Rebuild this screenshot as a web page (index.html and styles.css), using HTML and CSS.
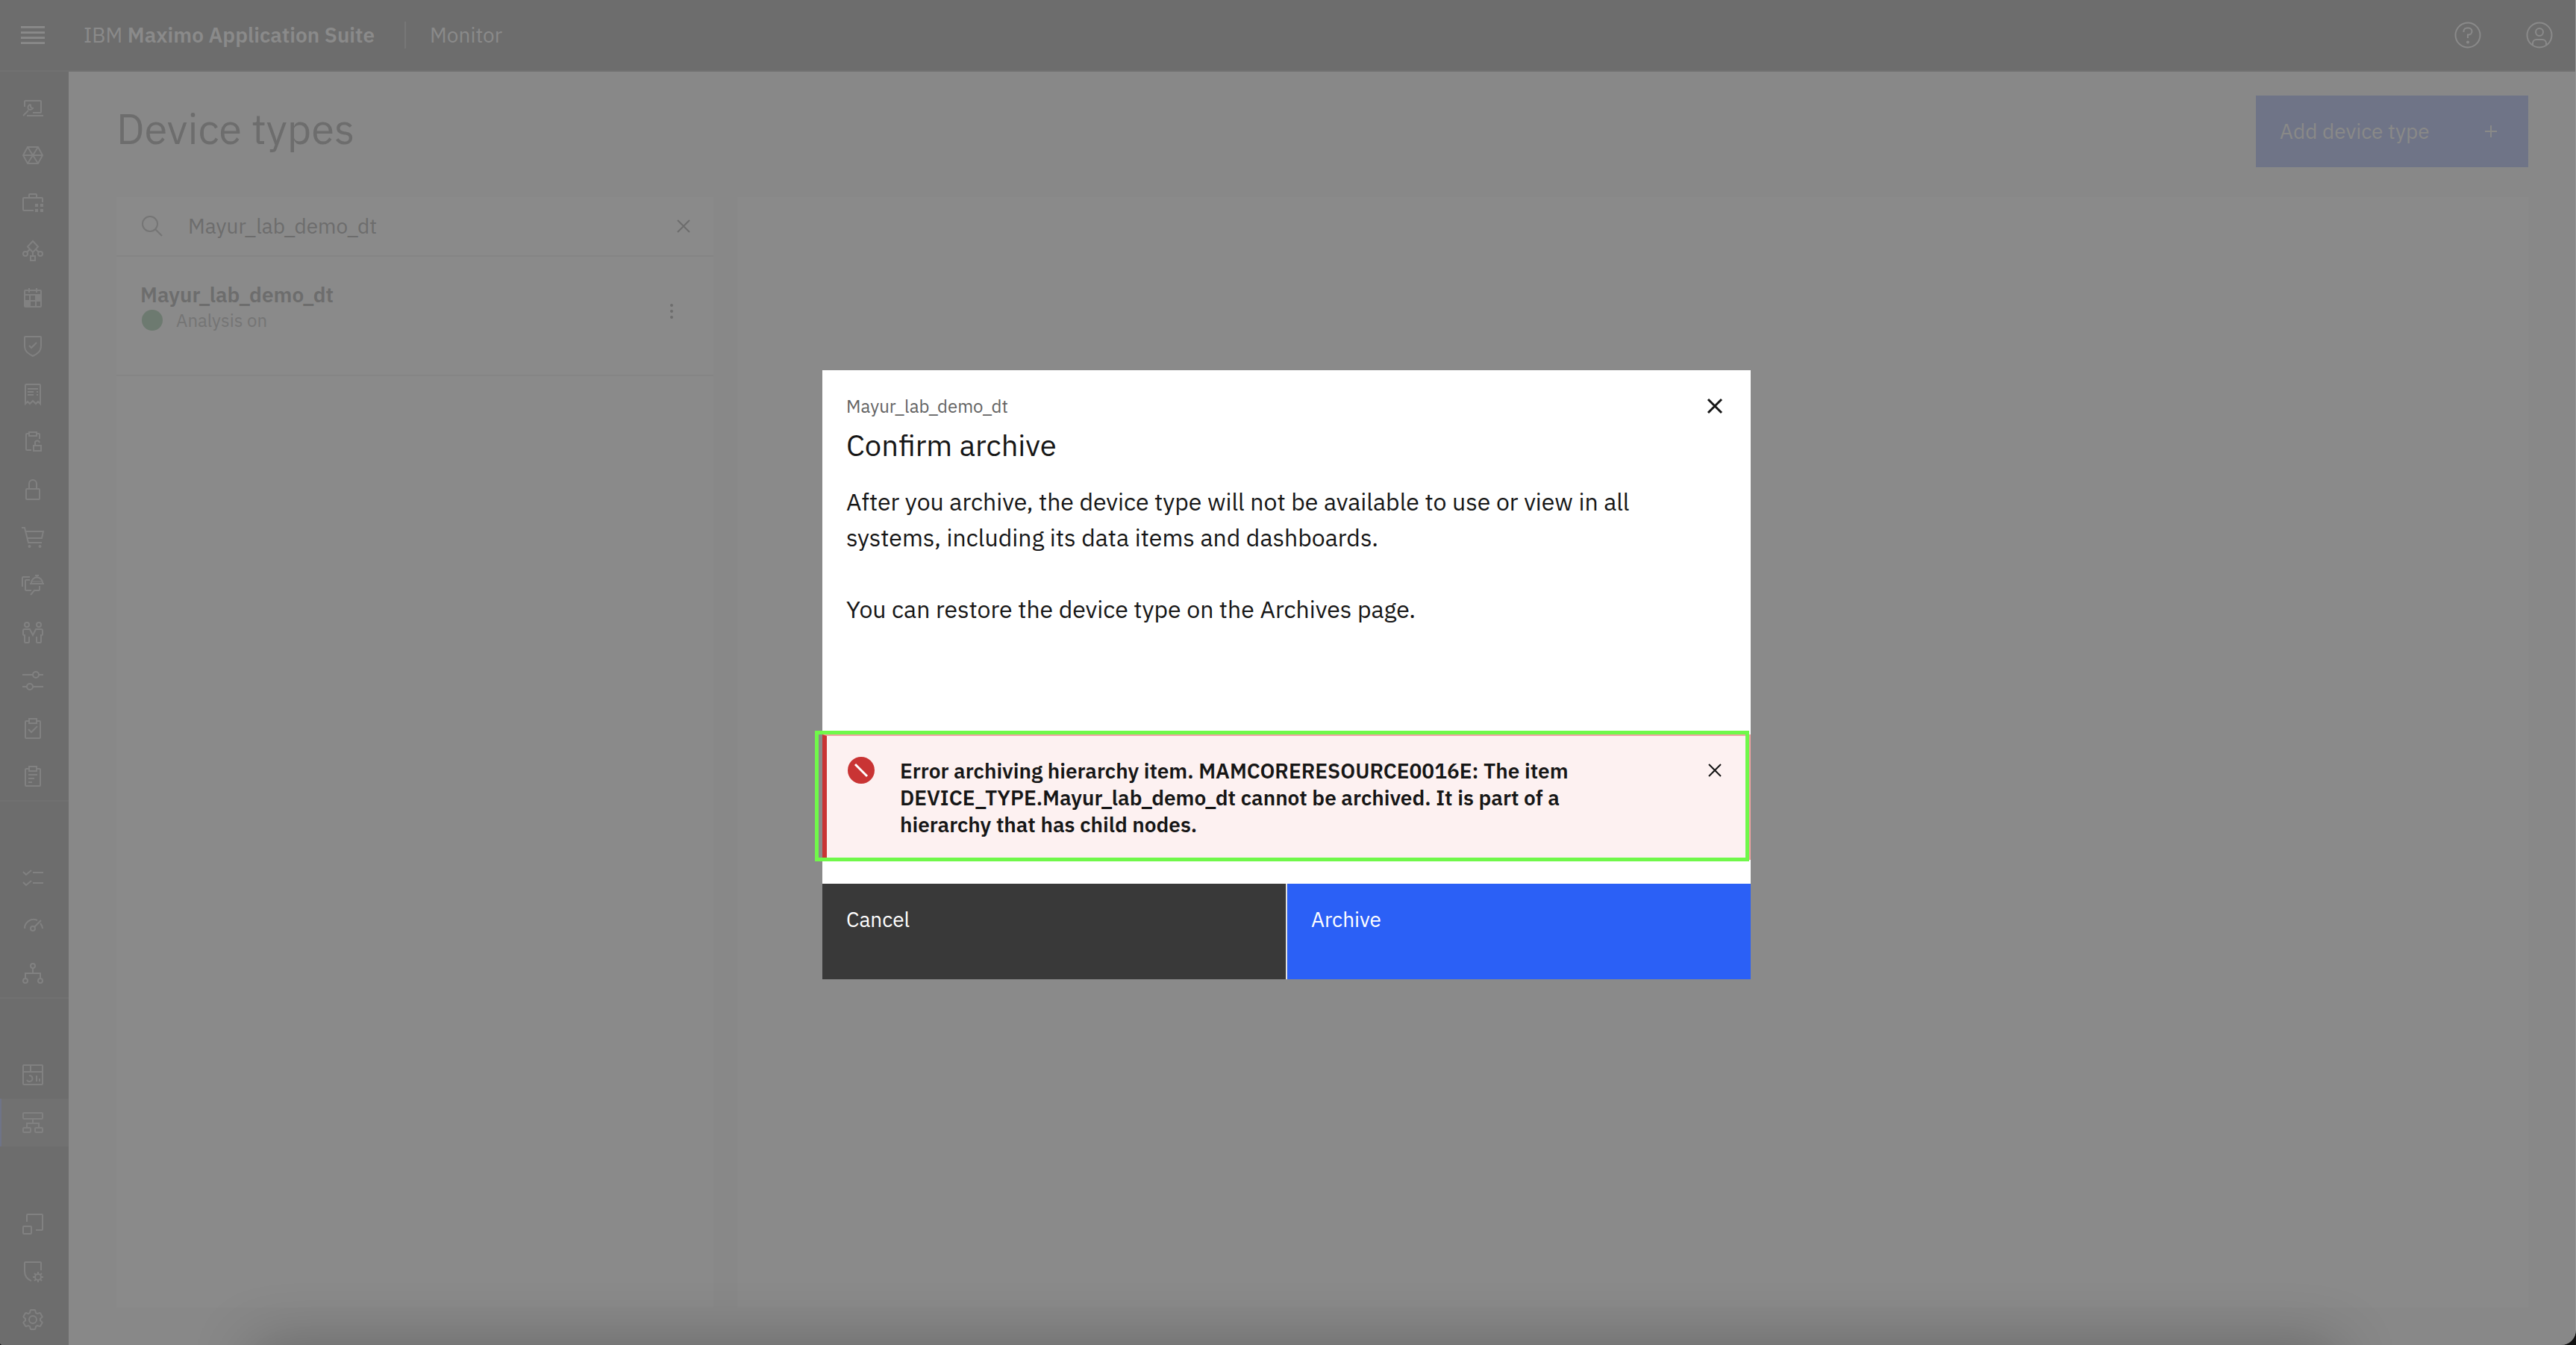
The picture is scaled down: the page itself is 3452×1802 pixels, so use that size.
FILE: index.html
```html
<!DOCTYPE html>
<html lang="en">
<head>
<meta charset="utf-8">
<meta name="viewport" content="width=device-width, initial-scale=1">
<title>Device types - IBM Maximo Application Suite</title>
<link rel="stylesheet" href="styles.css">
</head>
<body>
<div class="app">
  <header class="header">
    <button class="header-btn menu-btn" type="button" aria-label="Open menu">
      <svg class="icon-lg" viewBox="0 0 20 20"><path fill="currentColor" d="M2 4h16v1.4H2zM2 7.6h16V9H2zM2 11.1h16v1.4H2zM2 14.6h16V16H2z"/></svg>
    </button>
    <a class="brand" href="#">IBM <strong>Maximo Application Suite</strong></a>
    <span class="brand-divider"></span>
    <a class="product" href="#">Monitor</a>
    <div class="header-actions">
      <button class="header-btn" type="button" aria-label="Help">
        <svg class="icon-lg" viewBox="0 0 40 40" fill="none" stroke="currentColor" stroke-width="2"><circle cx="20" cy="20" r="16.5"/><path d="M14.5 16v-1a4.500 4.500 0 0 1 4.500-4.500h2a4.500 4.500 0 0 1 0 9h-1V24"/><circle cx="20" cy="29.500" r="2" fill="currentColor" stroke="none"/></svg>
      </button>
      <button class="header-btn" type="button" aria-label="Account">
        <svg class="icon-lg" viewBox="0 0 40 40" fill="none" stroke="currentColor" stroke-width="2"><circle cx="20" cy="20" r="16.5"/><circle cx="20" cy="16" r="5"/><path d="M11 33v-2a5 5 0 0 1 5-5h8a5 5 0 0 1 5 5v2"/></svg>
      </button>
    </div>
  </header>

  <nav class="sidenav" aria-label="Main">
    <div class="nav-group">
      <a class="nav-item" href="#" aria-label="Technician"><svg class="icon" viewBox="0 0 32 32"><path d="M5 15V8a1 1 0 0 1 1-1h20a1 1 0 0 1 1 1v14a1 1 0 0 1-1 1H16M8 27h22M3 27l7-7M13 12a4 4 0 0 0-3 6 4 4 0 0 0 6-1M13 12v3l2 2h2"/></svg></a>
      <a class="nav-item" href="#" aria-label="Assets"><svg class="icon" viewBox="0 0 32 32"><path d="M9 5h14l6 11-6 11H9L3 16zM9 5l14 22M23 5L9 27M3 16h26"/></svg></a>
      <a class="nav-item" href="#" aria-label="Portfolio"><svg class="icon" viewBox="0 0 32 32"><path d="M29 15v-5a1 1 0 0 0-1-1H4a1 1 0 0 0-1 1v15a1 1 0 0 0 1 1h13M11 9V5a1 1 0 0 1 1-1h8a1 1 0 0 1 1 1v4"/><path class="solid" d="M19 17h4v4h-4zM26 17h4v4h-4zM19 24h4v4h-4zM26 24h4v4h-4z"/></svg></a>
      <a class="nav-item" href="#" aria-label="Models"><svg class="icon" viewBox="0 0 32 32"><path d="M16 3l7 7.500-7 7.500-7-7.500zM16 18v4M12 14l-4 4M20 14l4 4M13 23h6v6h-6z"/><circle cx="6" cy="20" r="3"/><circle cx="26" cy="20" r="3"/></svg></a>
      <a class="nav-item" href="#" aria-label="Planning"><svg class="icon" viewBox="0 0 32 32"><path class="solid" fill-rule="evenodd" d="M6 4h4V2h2v2h8V2h2v2h4a2 2 0 0 1 2 2v20a2 2 0 0 1-2 2H6a2 2 0 0 1-2-2V6a2 2 0 0 1 2-2zM6 6v4h20V6h-4v2h-2V6h-8v2h-2V6zM6 12v6h5v-6zM13 12v6h6v-6zM13 20v6h6v-6zM21 20v6h5v-6z"/></svg></a>
      <a class="nav-item" href="#" aria-label="Safety"><svg class="icon" viewBox="0 0 32 32"><path d="M6 3h20a1 1 0 0 1 1 1v11c0 8-5 11-11 14C10 26 5 23 5 15V4a1 1 0 0 1 1-1zM11 15l3 3 7-7"/></svg></a>
      <a class="nav-item" href="#" aria-label="Purchasing"><svg class="icon" viewBox="0 0 32 32"><path d="M6 29V4a1 1 0 0 1 1-1h18a1 1 0 0 1 1 1v25l-3-3-3 3-4-4-4 4-3-3zM9 9h14M9 13h8M9 17h8M21 13h2M21 17h2"/></svg></a>
      <a class="nav-item" href="#" aria-label="Contracts"><svg class="icon" viewBox="0 0 32 32"><path d="M11 5H8a1 1 0 0 0-1 1v20a1 1 0 0 0 1 1h6M21 5h3a1 1 0 0 1 1 1v6M11 3h10v5H11zM17 21h10v7H17zM19 21v-3a3 3 0 0 1 6-1"/></svg></a>
      <a class="nav-item" href="#" aria-label="Security"><svg class="icon" viewBox="0 0 32 32"><rect x="7" y="15" width="18" height="14" rx="1"/><path d="M11 15V8a5 5 0 0 1 10 0v7"/></svg></a>
      <a class="nav-item" href="#" aria-label="Inventory"><svg class="icon" viewBox="0 0 32 32"><path d="M1 3h4l5 20h18M7 8h23l-2 9H8"/><circle class="solid" cx="11.500" cy="28" r="2"/><circle class="solid" cx="25.500" cy="28" r="2"/></svg></a>
      <a class="nav-item" href="#" aria-label="Service desk"><svg class="icon" viewBox="0 0 32 32"><path d="M12 14h19M14 13a7.500 7.500 0 0 1 15 0M21.500 3v3M19 3h5M2 18V6a1 1 0 0 1 1-1h9M14 23H7a1 1 0 0 1-1-1V10a1 1 0 0 1 1-1h5M13 29l5-6h6a1 1 0 0 0 1-1v-5"/><path d="M15 11h13" stroke-width="1"/></svg></a>
      <a class="nav-item" href="#" aria-label="Resources"><svg class="icon" viewBox="0 0 32 32"><circle cx="8" cy="5" r="3"/><circle cx="24" cy="5" r="3"/><path d="M11 21v7a1 1 0 0 1-1 1H6a1 1 0 0 1-1-1v-9H4a1 1 0 0 1-1-1v-5a2 2 0 0 1 2-2h7l4 8 4-8h7a2 2 0 0 1 2 2v5a1 1 0 0 1-1 1h-1v9a1 1 0 0 1-1 1h-4a1 1 0 0 1-1-1v-7"/></svg></a>
      <a class="nav-item" href="#" aria-label="Adjustments"><svg class="icon" viewBox="0 0 32 32"><path d="M2 8h14M24 8h6M2 24h6M16 24h14"/><circle cx="20" cy="8" r="4"/><circle cx="12" cy="24" r="4"/></svg></a>
      <a class="nav-item" href="#" aria-label="Tasks"><svg class="icon" viewBox="0 0 32 32"><path d="M11 6H7a1 1 0 0 0-1 1v21a1 1 0 0 0 1 1h18a1 1 0 0 0 1-1V7a1 1 0 0 0-1-1h-4M11 3h10v6H11zM10 17l4 4 8-8"/></svg></a>
      <a class="nav-item" href="#" aria-label="Work orders"><svg class="icon" viewBox="0 0 32 32"><path d="M11 6H7a1 1 0 0 0-1 1v21a1 1 0 0 0 1 1h18a1 1 0 0 0 1-1V7a1 1 0 0 0-1-1h-4M11 3h10v6H11zM10 14h12M10 19h8M10 24h5"/></svg></a>
    </div>
    <div class="nav-group">
      <a class="nav-item" href="#" aria-label="Checklists"><svg class="icon" viewBox="0 0 32 32"><path d="M16 9h14M16 23h14M3 8l4 4 7-6M3 22l4 4 7-6"/></svg></a>
      <a class="nav-item" href="#" aria-label="Meters"><svg class="icon" viewBox="0 0 32 32"><path d="M5 20A12 12 0 0 1 22 9M29 20a12 12 0 0 0-3-7M18 18l9-9"/><circle cx="16" cy="20" r="3"/></svg></a>
      <a class="nav-item" href="#" aria-label="Hierarchies"><svg class="icon" viewBox="0 0 32 32"><circle cx="16" cy="6" r="3"/><circle cx="6" cy="26" r="3"/><circle cx="26" cy="26" r="3"/><path d="M16 9v7M6 23v-7h20v7"/></svg></a>
    </div>
    <div class="nav-group">
      <a class="nav-item" href="#" aria-label="Dashboards"><svg class="icon" viewBox="0 0 32 32"><rect x="3" y="3" width="26" height="26" rx="1"/><path d="M3 12h26M13 3v9M21 17v8M25 21v4M11 17a4 4 0 1 1-3 6"/></svg></a>
      <a class="nav-item active" href="#" aria-label="Device types" aria-current="page"><svg class="icon" viewBox="0 0 32 32"><rect x="3" y="3" width="26" height="8" rx="1"/><rect x="3" y="23" width="10" height="6" rx="1"/><rect x="19" y="23" width="10" height="6" rx="1"/><path d="M16 11v6M8 23v-6h16v6"/></svg></a>
    </div>
    <div class="nav-group">
      <a class="nav-item" href="#" aria-label="Setup"><svg class="icon" viewBox="0 0 32 32"><rect x="3" y="19" width="11" height="10" rx="1"/><path d="M8 13V4a1 1 0 0 1 1-1h19a1 1 0 0 1 1 1v19a1 1 0 0 1-1 1h-8"/></svg></a>
      <a class="nav-item" href="#" aria-label="Administration"><svg class="icon" viewBox="0 0 32 32"><path d="M27 14V4a1 1 0 0 0-1-1H6a1 1 0 0 0-1 1v11c0 7 4 11 9 13"/><circle cx="23" cy="23" r="4"/><path d="M23 16v3M23 27v3M16 23h3M27 23h3M18 18l2 2M26 26l2 2M18 28l2-2M26 20l2-2"/></svg></a>
      <a class="nav-item" href="#" aria-label="Settings"><svg class="icon" viewBox="0 0 32 32"><path class="solid" d="M27,16.760c0-.25,0-.5,0-.76s0-.51,0-.77l1.920-1.680A2,2,0,0,0,29.300,11L26.940,7a2,2,0,0,0-1.730-1,2,2,0,0,0-.64.1l-2.430.82a11.350,11.350,0,0,0-1.310-.75l-.51-2.520a2,2,0,0,0-2-1.610H13.640a2,2,0,0,0-2,1.610l-.51,2.520a11.480,11.480,0,0,0-1.320.75L7.430,6.060A2,2,0,0,0,6.790,6,2,2,0,0,0,5.060,7L2.700,11a2,2,0,0,0,.41,2.510L5,15.240c0,.25,0,.5,0,.76s0,.51,0,.77L3.110,18.450A2,2,0,0,0,2.700,21L5.060,25a2,2,0,0,0,1.730,1,2,2,0,0,0,.64-.1l2.430-.82a11.350,11.350,0,0,0,1.310.75l.51,2.520a2,2,0,0,0,2,1.610h4.720a2,2,0,0,0,2-1.610l.51-2.520a11.480,11.480,0,0,0,1.320-.75l2.420.82a2,2,0,0,0,.64.1,2,2,0,0,0,1.730-1L29.300,21a2,2,0,0,0-.41-2.510ZM25.210,24l-3.430-1.160a8.860,8.860,0,0,1-2.710,1.570L18.360,28H13.640l-.71-3.550a9.360,9.360,0,0,1-2.700-1.570L6.790,24,4.430,20l2.720-2.400a8.900,8.900,0,0,1,0-3.130L4.430,12,6.790,8l3.430,1.160a8.860,8.860,0,0,1,2.710-1.570L13.640,4h4.720l.71,3.550a9.360,9.360,0,0,1,2.700,1.570L25.210,8,27.570,12l-2.720,2.400a8.900,8.900,0,0,1,0,3.130L27.570,20Z"/><circle cx="16" cy="16" r="5"/></svg></a>
    </div>
  </nav>

  <main class="main">
    <div class="page-head">
      <h1 class="page-title">Device types</h1>
      <button class="add-btn" type="button"><span>Add device type</span>
        <svg class="icon" viewBox="0 0 32 32"><path d="M16 8v16M8 16h16"/></svg>
      </button>
    </div>
    <div class="panels">
      <section class="panel list-panel" aria-label="Device type list">
        <div class="search">
          <svg class="icon search-icon" viewBox="0 0 32 32"><circle cx="13" cy="13" r="10"/><path d="M20 20l9 9"/></svg>
          <input class="search-input" type="text" aria-label="Search device types" value="Mayur_lab_demo_dt">
          <button class="icon-btn" type="button" aria-label="Clear search"><svg class="icon" viewBox="0 0 32 32"><path d="M8 8l16 16M24 8L8 24"/></svg></button>
        </div>
        <div class="device">
          <div class="device-text">
            <h2 class="device-name">Mayur_lab_demo_dt</h2>
            <p class="device-status"><span class="status-dot"></span>Analysis on</p>
          </div>
          <button class="icon-btn" type="button" aria-label="More actions"><svg class="icon" viewBox="0 0 32 32"><circle class="solid" cx="16" cy="8" r="2"/><circle class="solid" cx="16" cy="16" r="2"/><circle class="solid" cx="16" cy="24" r="2"/></svg></button>
        </div>
      </section>
      <section class="panel" aria-label="Device type details"></section>
    </div>
  </main>
  <div class="dock-shadow"></div>
</div>

<div class="overlay">
  <div class="modal" role="dialog" aria-modal="true" aria-labelledby="modal-title">
    <div class="modal-head">
      <div>
        <p class="modal-label">Mayur_lab_demo_dt</p>
        <h2 class="modal-title" id="modal-title">Confirm archive</h2>
      </div>
      <button class="close-btn" type="button" aria-label="Close"><svg class="icon-lg" viewBox="0 0 40 40"><path d="M11 11l18 18M29 11L11 29" stroke-width="3"/></svg></button>
    </div>
    <div class="modal-body">
      <p>After you archive, the device type will not be available to use or view in all systems, including its data items and dashboards.</p>
      <p>You can restore the device type on the Archives page.</p>
    </div>
    <div class="notice" role="alert">
      <svg class="icon-lg notice-icon" viewBox="0 0 40 40"><circle cx="20" cy="20" r="18" fill="#c93434" stroke="none"/><path d="M12 12l16 16" stroke="#fff" stroke-width="3"/></svg>
      <p class="notice-text">Error archiving hierarchy item. MAMCORERESOURCE0016E: The item DEVICE_TYPE.Mayur_lab_demo_dt cannot be archived. It is part of a hierarchy that has child nodes.</p>
      <button class="close-btn" type="button" aria-label="Dismiss error"><svg class="icon-lg" viewBox="0 0 40 40"><path d="M12 12l16 16M28 12L12 28" stroke-width="2"/></svg></button>
      <div class="highlight"></div>
    </div>
    <div class="modal-foot">
      <button class="foot-btn cancel" type="button">Cancel</button>
      <button class="foot-btn primary" type="button">Archive</button>
    </div>
  </div>
</div>
</body>
</html>
```
FILE: styles.css
```css
* {
  box-sizing: border-box;
}

body {
  margin: 0;
  background: #101010;
  color: #6d6d6d;
  font-family: "IBM Plex Sans", "Liberation Sans", Arial, sans-serif;
  font-size: 28px;
  line-height: 36px;
}

h1, h2, p {
  margin: 0;
  font-weight: 400;
}

a {
  color: inherit;
  text-decoration: none;
}

button, input {
  border: 0;
  padding: 0;
  background: none;
  color: inherit;
  font: inherit;
}

svg {
  display: block;
  flex: none;
  fill: none;
  stroke: currentColor;
  stroke-width: 2;
}

.solid {
  fill: currentColor;
  stroke: none;
}

.menu-btn svg {
  stroke: none;
}

.icon {
  width: 32px;
  height: 32px;
}

.icon-lg {
  width: 40px;
  height: 40px;
}

/* Shell */
.app {
  position: relative;
  display: grid;
  grid-template: 96px 1fr / 92px 1fr;
  min-height: 100vh;
  overflow: hidden;
  background: #888;
  border-radius: 0 0 20px 4px;
  border-right: 1px solid #979797;
}

.header {
  grid-column: 1 / -1;
  display: flex;
  align-items: center;
  background: #6d6d6d;
  border-bottom: 2px solid #717171;
  color: #8a8a8a;
}

.header-btn {
  display: flex;
  align-items: center;
  justify-content: center;
  width: 96px;
  height: 94px;
}

.menu-btn {
  width: 88px;
}

.brand {
  margin-left: 24px;
}

.brand strong {
  font-weight: 600;
}

.brand-divider {
  width: 2px;
  height: 36px;
  margin: 0 32px 0 40px;
  background: #777;
}

.header-actions {
  display: flex;
  margin-left: auto;
}

.sidenav {
  display: flex;
  flex-direction: column;
  gap: 70px;
  padding-top: 16px;
  background: #6d6d6d;
  color: #818181;
}

.nav-group:not(:nth-last-child(-n+2)) {
  border-bottom: 2px solid #717171;
}

.nav-group:nth-last-child(2) {
  margin-bottom: 2px;
}

.nav-item {
  display: flex;
  align-items: center;
  height: 64px;
  padding-left: 28px;
}

.nav-item.active {
  padding-left: 26px;
  background: #717171;
  border-left: 2px solid #6f7487;
}

/* Page */
.main {
  display: flex;
  flex-direction: column;
  gap: 40px;
  padding: 32px 63px 50px 64px;
}

.page-head {
  display: flex;
  justify-content: space-between;
  height: 96px;
}

.page-title {
  font-size: 56px;
  line-height: 88px;
}

.add-btn {
  display: flex;
  align-items: center;
  justify-content: space-between;
  width: 365px;
  padding: 0 34px 0 32px;
  background: #6f7487;
  color: #898988;
}

.panels {
  flex: 1;
  display: grid;
  grid-template-columns: 800px 1fr;
  gap: 32px;
}

.panel {
  background: #8a8a8a;
}

.search {
  display: flex;
  align-items: center;
  gap: 32px;
  height: 80px;
  padding: 0 24px 0 32px;
  border-bottom: 2px solid #858585;
}

.search-icon {
  color: #757575;
}

.search-input {
  flex: 1;
  min-width: 0;
}

.icon-btn {
  display: flex;
  flex: none;
}

.device {
  display: flex;
  align-items: center;
  justify-content: space-between;
  height: 160px;
  padding: 0 40px 24px 32px;
  border-bottom: 2px solid #858585;
}

.device .icon-btn {
  padding-top: 12px;
}

.device-name {
  font-size: 28px;
  font-weight: 600;
}

.device-status {
  display: flex;
  align-items: center;
  gap: 18px;
  padding-left: 2px;
  font-size: 24px;
  line-height: 32px;
  color: #757575;
}

.status-dot {
  width: 28px;
  height: 28px;
  border-radius: 50%;
  background: #6d7a70;
}

.dock-shadow {
  position: absolute;
  top: 100%;
  left: 340px;
  right: 320px;
  height: 200px;
  box-shadow: 0 0 80px rgba(0, 0, 0, 0.25);
}

/* Dialog */
.overlay {
  position: fixed;
  inset: 0;
  display: flex;
  align-items: center;
  justify-content: center;
  padding: 6px 4px 0 0;
}

.modal {
  display: flex;
  flex-direction: column;
  width: 1244px;
  min-height: 816px;
  background: #fff;
  color: #161616;
}

.modal-head {
  display: flex;
  justify-content: space-between;
  padding: 32px 0 0 32px;
}

.modal-label {
  font-size: 24px;
  line-height: 32px;
  color: #636363;
}

.modal-title {
  padding-top: 10px;
  font-size: 40px;
  line-height: 52px;
}

.close-btn {
  display: flex;
  justify-content: center;
  width: 96px;
}

.modal-head .close-btn {
  margin-top: -4px;
}

.notice .close-btn {
  width: 92px;
}

.modal-body {
  flex: 1;
  display: flex;
  flex-direction: column;
  gap: 48px;
  padding: 26px 82px 48px 32px;
  font-size: 32px;
  line-height: 48px;
}

.notice {
  position: relative;
  display: flex;
  align-items: flex-start;
  min-height: 168px;
  margin-bottom: 32px;
  padding-top: 26px;
  background: #fdf1f1;
  border: 2px solid #f0a3a3;
  border-left: 6px solid #c93434;
}

.notice-icon {
  margin-left: 26px;
}

.notice-text {
  flex: 1;
  padding: 3px 64px 0 32px;
  font-weight: 600;
}

.highlight {
  position: absolute;
  inset: -7px 0 -4px -16px;
  border: 5px solid #70f84a;
  pointer-events: none;
}

.modal-foot {
  display: grid;
  grid-template-columns: 1fr 1fr;
  gap: 2px;
  height: 128px;
  background: #e0e0e0;
}

.foot-btn {
  display: flex;
  align-items: flex-start;
  padding: 30px 32px;
  color: #fff;
}

.cancel {
  background: #393939;
}

.primary {
  background: #2b60f6;
}
```
